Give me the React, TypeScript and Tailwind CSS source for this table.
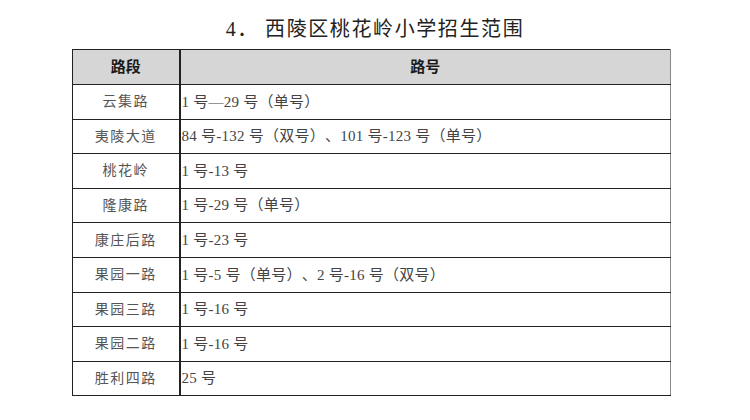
const rows: [string, string][] = [
  ["云集路", "1 号—29 号（单号）"],
  ["夷陵大道", "84 号-132 号（双号）、101 号-123 号（单号）"],
  ["桃花岭", "1 号-13 号"],
  ["隆康路", "1 号-29 号（单号）"],
  ["康庄后路", "1 号-23 号"],
  ["果园一路", "1 号-5 号（单号）、2 号-16 号（双号）"],
  ["果园三路", "1 号-16 号"],
  ["果园二路", "1 号-16 号"],
  ["胜利四路", "25 号"],
];

const font = { fontFamily: '"Liberation Serif", "Noto Sans CJK SC", serif' };

export default function App() {
  return (
    <div className="h-[420px] w-[750px] bg-white [text-spacing-trim:space-all]" style={font}>
      <div className="flex h-[49px] items-center justify-center pt-[8px]">
        <h1
          className="text-[20px] leading-none tracking-[1.6px] text-[#222]"
          style={{ fontFamily: '"Noto Sans CJK SC", sans-serif' }}
        >
          <span style={font}>4</span>．&nbsp;西陵区桃花岭小学招生范围
        </h1>
      </div>
      <table className="ml-[72px] w-[599px] border-collapse">
        <thead>
          <tr className="h-[35px] bg-[#d6d6d6]">
            <th className="w-[107px] border border-r-2 border-[#222] text-[15px] font-bold text-[#1a1a1a]">
              路段
            </th>
            <th className="border border-[#222] border-r-[#888] text-[15px] font-bold text-[#1a1a1a]">
              路号
            </th>
          </tr>
        </thead>
        <tbody>
          {rows.map(([road, nums]) => (
            <tr key={road} className="h-[34.6px]">
              <td className="border border-r-2 border-[#222] text-center text-[14px] tracking-[1.5px] text-[#555]">
                {road}
              </td>
              <td className="border border-[#222] border-r-[#888] pl-[1px] text-[15px] tracking-[0.25px] text-[#444]">
                {nums}
              </td>
            </tr>
          ))}
        </tbody>
      </table>
    </div>
  );
}
